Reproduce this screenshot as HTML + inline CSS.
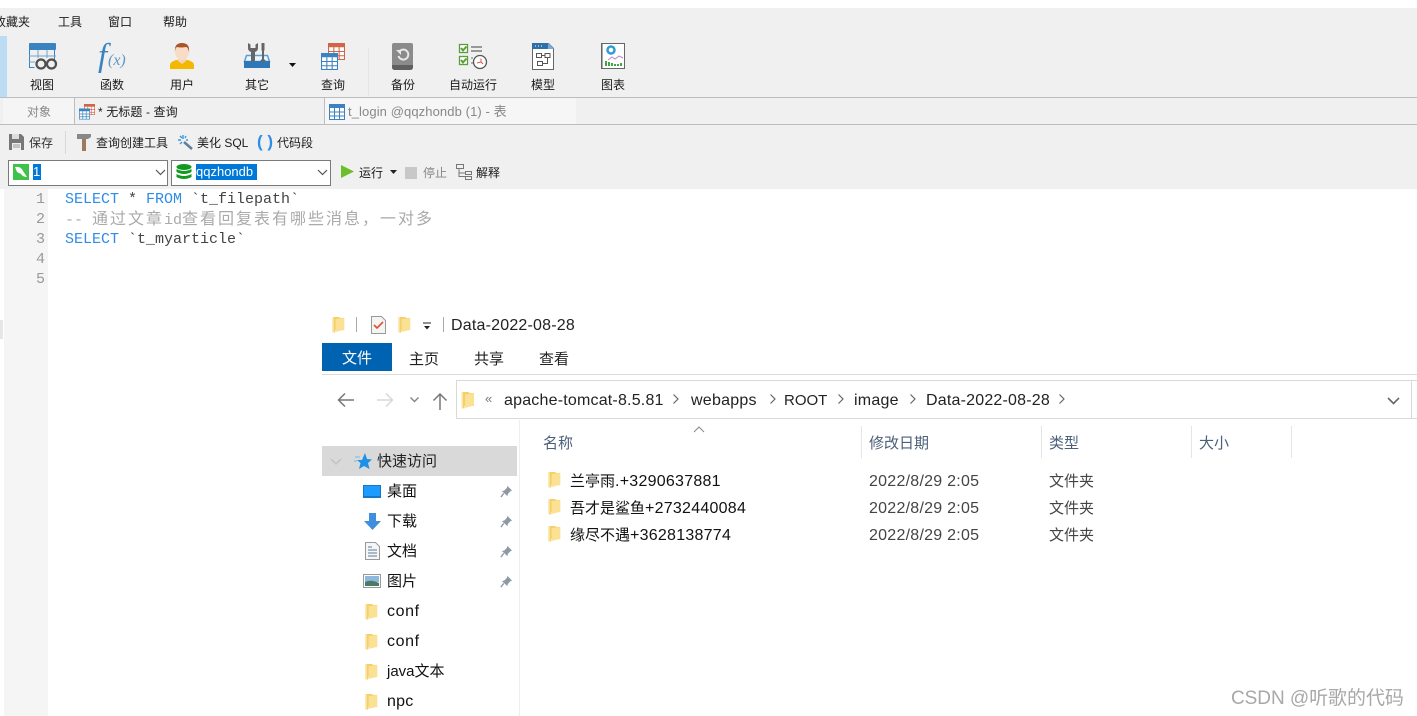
<!DOCTYPE html>
<html><head><meta charset="utf-8"><style>
html,body{margin:0;padding:0;background:#fff}
#p{position:relative;width:1417px;height:716px;overflow:hidden;background:#fff;font-family:"Liberation Sans","Noto Sans CJK SC",sans-serif;color:#1a1a1a}
#p div,#p span.t,#p svg{position:absolute}
.t{position:absolute;white-space:nowrap;line-height:20px;height:20px}
.s{font-size:12px}
.c{text-align:center;width:80px}
.n{font-size:15px}
.l{font-size:16px;letter-spacing:.25px}
.m{font-family:"Liberation Mono","Noto Sans CJK SC",monospace;font-size:15px;color:#2f8ce8}
.m i{font-style:normal;font-size:16px;letter-spacing:2px}
.m b{font-weight:normal;color:#444}
</style></head><body><div id="p">
<svg width="0" height="0"><defs>
<symbol id="f" viewBox="0 0 13 18"><path d="M0 1h7l1 1h4.500v13H3v2.500H0z" fill="#f5d06a"/><path d="M3.500 3.500L12.500 2v12.500L3.500 17z" fill="#fbe193"/><path d="M0 1h1.500v16.500H0z" fill="#fbe6a8"/></symbol>
<symbol id="pin" viewBox="0 0 14 14"><path d="M8 1l5 5-1.500.5-3 3L8 12 2 6.500l2.500-.5 3-3z" fill="#8e99a3"/><path d="M4 9l-3 4" stroke="#8e99a3" stroke-width="1.500"/></symbol>
<symbol id="tb" viewBox="0 0 16 16"><rect x=".5" y=".5" width="15" height="15" fill="#fff" stroke="#3b83c0"/><rect width="16" height="4" fill="#3b83c0"/><path d="M0 8h16M0 12h16M5.500 4v12M10.500 4v12" stroke="#3b83c0"/></symbol>
<symbol id="tr" viewBox="0 0 16 16"><rect x=".5" y=".5" width="15" height="15" fill="#fff" stroke="#d2644a"/><rect width="16" height="4" fill="#d2644a"/><path d="M0 8h16M0 12h16M5.500 4v12M10.500 4v12" stroke="#d2644a"/></symbol>
</defs></svg>

<!-- app chrome -->
<div style="left:0;top:8px;width:1417px;height:181px;background:#f0f0f0"></div>
<div style="left:0;top:36px;width:7px;height:61px;background:#bcdcf4"></div>
<span class="t s" style="left:-6px;top:12px">收藏夹</span>
<span class="t s" style="left:58px;top:12px">工具</span>
<span class="t s" style="left:108px;top:12px">窗口</span>
<span class="t s" style="left:163px;top:12px">帮助</span>

<!-- view -->
<svg style="left:28px;top:42px" width="30" height="28" viewBox="0 0 30 28"><path d="M1.500 1.500h25v18M1.500 1.500v24h5" fill="none" stroke="#3b83c0"/><rect x="1" y="1" width="27" height="7" rx="1" fill="#3b83c0"/><path d="M1 14h27M1 20h6M10 8v8M19 8v8" stroke="#6fa5d0"/><circle cx="13" cy="22" r="4.500" fill="#f0f0f0" stroke="#4f4f4f" stroke-width="2.200"/><circle cx="23.500" cy="22" r="4.500" fill="#f0f0f0" stroke="#4f4f4f" stroke-width="2.200"/></svg>
<span class="t" style="left:98px;top:43px;font:italic 33px/27px 'Liberation Serif',serif;color:#3b83c0;height:27px">f</span>
<span class="t" style="left:108px;top:52px;font:italic 16px/18px 'Liberation Serif',serif;color:#5c98c8;height:18px">(x)</span>
<!-- user -->
<svg style="left:169px;top:42px" width="26" height="28" viewBox="0 0 26 28"><path d="M1 27v-4q0-3 6-5h12q6 2 6 5v4z" fill="#f5b800"/><path d="M9 13h8v6l-4 3-4-3z" fill="#f3d4bc"/><ellipse cx="13" cy="10" rx="7" ry="8" fill="#f8dcc8"/><path d="M6 10q-1-9 7-9t7 9q-1-5-3-5-5 1-9 0-2 1-2 5z" fill="#a8562a"/></svg>
<!-- tools -->
<svg style="left:243px;top:42px" width="28" height="28" viewBox="0 0 28 28"><path d="M3.500 13.500h21l2 6h-25z" fill="#eef4fa" stroke="#5aa0d8" stroke-width="1.500"/><path d="M1 19h26v7H1z" fill="#2f78b5"/><path d="M5 1v5q0 3 3 4v9h4v-9q3-1 3-4V1l-2.500 1.500v3.500h-5V2.500z" fill="#666"/><path d="M18.500 1h3v7l-.5 1v8l2 2h-6l2-2V9l-.5-1z" fill="#666"/></svg>
<svg style="left:289px;top:63px" width="7" height="5"><path d="M0 0h7L3.500 4z" fill="#111"/></svg>
<!-- query -->
<svg style="left:328px;top:43px" width="17" height="17"><use href="#tr" width="17" height="17"/></svg>
<svg style="left:321px;top:53px" width="17" height="17"><use href="#tb" width="17" height="17"/></svg>
<div style="left:368px;top:48px;width:1px;height:48px;background:#e2e6ea"></div>
<!-- backup -->
<svg style="left:392px;top:43px" width="21" height="27" viewBox="0 0 21 27"><rect width="21" height="26" rx="2" fill="#8b8b8b"/><path d="M0 22h21v2q0 3-3 3H3q-3 0-3-3z" fill="#606060"/><path d="M7 9a5 5 0 1 1-.5 4" fill="none" stroke="#e8e8e8" stroke-width="2"/><path d="M4 7h5v5z" fill="#e8e8e8"/></svg>
<!-- autorun -->
<svg style="left:458px;top:43px" width="30" height="27" viewBox="0 0 30 27"><rect x="1.500" y="1.500" width="8" height="8" fill="#fff" stroke="#5b9e3a" stroke-width="1.300"/><path d="M3 5l2 2.500L8.500 3.500" fill="none" stroke="#5b9e3a" stroke-width="2"/><rect x="1.500" y="13.500" width="8" height="8" fill="#fff" stroke="#5b9e3a" stroke-width="1.300"/><path d="M3 17l2 2.500 3.500-4" fill="none" stroke="#5b9e3a" stroke-width="2"/><path d="M13 4h11M13 8h11" stroke="#999" stroke-width="2"/><path d="M13 15h2M13 20h2" stroke="#999" stroke-width="1.500"/><circle cx="22" cy="19" r="6.500" fill="#fff" stroke="#555" stroke-width="1.300"/><path d="M23 15.500v3.500l-4 1M23 19l2 2" fill="none" stroke="#d9534f"/></svg>
<!-- model -->
<svg style="left:532px;top:43px" width="22" height="27" viewBox="0 0 22 27"><path d="M.5 .5h16l5 5v21H.5z" fill="#fff" stroke="#666"/><path d="M0 0h16v6H0z" fill="#2f6ea8"/><path d="M16 0l6 6h-6z" fill="#6fb0e0"/><path d="M3 3h1M6 3h1M9 3h1" stroke="#fff"/><path d="M4.500 10.500h5v4h-5zM13 10.500h5v4h-5zM5.500 18.500h5v4h-5zM9.500 12.500h3.500M15.500 14.500v6h-5" fill="none" stroke="#555"/></svg>
<!-- chart -->
<svg style="left:601px;top:43px" width="24" height="27" viewBox="0 0 24 27"><rect x=".5" y=".5" width="23" height="25" fill="#fff" stroke="#666"/><path d="M1.500 1v24" stroke="#aaa"/><circle cx="10" cy="7" r="3.500" fill="none" stroke="#2f9bd8" stroke-width="2.500"/><path d="M7 17l4-3 3 2 4-3 4 2" fill="none" stroke="#c084d0"/><path d="M5 18v5M8 19v4M11 20v3M14 21v2M17 21v2M20 20v3" stroke="#3fa648" stroke-width="2"/></svg>

<span class="t s c" style="left:2px;top:75px">视图</span>
<span class="t s c" style="left:72px;top:75px">函数</span>
<span class="t s c" style="left:142px;top:75px">用户</span>
<span class="t s c" style="left:217px;top:75px">其它</span>
<span class="t s c" style="left:293px;top:75px">查询</span>
<span class="t s c" style="left:363px;top:75px">备份</span>
<span class="t s c" style="left:433px;top:75px">自动运行</span>
<span class="t s c" style="left:503px;top:75px">模型</span>
<span class="t s c" style="left:573px;top:75px">图表</span>

<!-- tabs -->
<div style="left:0;top:97px;width:1417px;height:1px;background:#bdbdbd"></div>
<div style="left:0;top:124px;width:1417px;height:1px;background:#bdbdbd"></div>
<div style="left:3px;top:98px;width:71px;height:26px;background:#f5f5f5;border-right:1px solid #bdbdbd"></div>
<span class="t s" style="left:27px;top:102px;color:#888">对象</span>
<svg style="left:84px;top:104px" width="11" height="11"><use href="#tr" width="11" height="11"/></svg>
<svg style="left:79px;top:108px" width="11" height="12"><use href="#tb" width="11" height="12"/></svg>
<span class="t s" style="left:98px;top:102px;letter-spacing:.1px">* 无标题 - 查询</span>
<div style="left:324px;top:98px;width:251px;height:26px;background:#f6f6f6;border-left:1px solid #bdbdbd"></div>
<svg style="left:329px;top:104px" width="16" height="16"><use href="#tb" width="16" height="16"/></svg>
<span class="t" style="left:348px;top:102px;color:#888;font-size:13px;letter-spacing:.1px">t_login @qqzhondb (1) - 表</span>

<!-- save toolbar -->
<svg style="left:9px;top:134px" width="15" height="16" viewBox="0 0 15 16"><path d="M0 0h12l3 3v13H0z" fill="#777"/><path d="M3 0h7v5H3z" fill="#ddd"/><path d="M3 9h9v7H3z" fill="#eee"/><path d="M4 11h7M4 13h7" stroke="#999"/></svg>
<span class="t s" style="left:29px;top:133px;color:#333">保存</span>
<div style="left:65px;top:131px;width:1px;height:23px;background:#d8d8d8"></div>
<svg style="left:77px;top:134px" width="14" height="17" viewBox="0 0 14 17"><path d="M0 0h14v3l-3 2H0z" fill="#888"/><path d="M5 5h4v12H5z" fill="#9a7b62"/></svg>
<span class="t s" style="left:96px;top:133px">查询创建工具</span>
<svg style="left:178px;top:135px" width="15" height="15" viewBox="0 0 15 15"><path d="M6 7l8 7" stroke="#5f7f9c" stroke-width="2.500"/><path d="M5 0v4M0 5h3M2 1l2 2M8 1L7 3M2 9l2-2M10 5H8" stroke="#3a9ae0" stroke-width="1.400"/></svg>
<span class="t s" style="left:197px;top:133px">美化 SQL</span>
<span class="t" style="left:257px;top:133px;font-size:17px;font-weight:bold;color:#2f8ce8;line-height:18px;letter-spacing:0">( )</span>
<span class="t s" style="left:277px;top:133px">代码段</span>

<!-- combos -->
<div style="left:8px;top:160px;width:158px;height:24px;border:1px solid #7a7a7a;background:#fff"></div>
<div style="left:13px;top:164px;width:16px;height:16px;background:#3fc24a"></div>
<svg style="left:14px;top:165px" width="14" height="14"><path d="M1 2q6-1 8 4l4 6q-4 0-6-3L3 7z" fill="#fff"/></svg>
<div style="left:33px;top:164px;width:8px;height:16px;background:#0078d7;color:#fff;font-size:13px;line-height:16px">1</div>
<svg style="left:155px;top:169px" width="11" height="7"><path d="M1 1l4.500 4.500L10 1" fill="none" stroke="#555" stroke-width="1.200"/></svg>
<div style="left:171px;top:160px;width:158px;height:24px;border:1px solid #7a7a7a;background:#fff"></div>
<svg style="left:176px;top:164px" width="16" height="16" viewBox="0 0 16 16"><ellipse cx="8" cy="3" rx="7.500" ry="3" fill="#119a1e"/><path d="M.5 5q7.500 4 15 0v3q-7.500 4-15 0zM.5 10q7.500 4 15 0v3q-7.500 4-15 0z" fill="#119a1e"/></svg>
<div style="left:196px;top:164px;width:61px;height:16px;background:#0078d7;color:#fff;font-size:13px;line-height:16px">qqzhondb</div>
<svg style="left:317px;top:169px" width="11" height="7"><path d="M1 1l4.500 4.500L10 1" fill="none" stroke="#555" stroke-width="1.200"/></svg>
<svg style="left:341px;top:165px" width="13" height="13"><path d="M0 0l13 6.500L0 13z" fill="#6cbf2a"/></svg>
<span class="t s" style="left:359px;top:163px">运行</span>
<svg style="left:390px;top:170px" width="7" height="4"><path d="M0 0h7L3.500 4z" fill="#222"/></svg>
<div style="left:405px;top:167px;width:12px;height:12px;background:#c8c8c8"></div>
<span class="t s" style="left:423px;top:163px;color:#888">停止</span>
<svg style="left:456px;top:164px" width="16" height="16" viewBox="0 0 16 16"><path d="M.5 .5h7v4h-7zM9.500 7.500h6v3h-6zM9.500 12.500h6v3h-6zM3 4.500v8h6M3 9h6" fill="none" stroke="#777"/></svg>
<span class="t s" style="left:476px;top:163px">解释</span>

<!-- editor -->
<div style="left:4px;top:189px;width:44px;height:527px;background:#f5f5f5"></div>
<div style="left:0;top:320px;width:3px;height:19px;background:#e6e6e6"></div>
<span class="t" style="left:36px;top:190px;font:15px/20px 'Liberation Mono',monospace;color:#999">1</span>
<span class="t" style="left:36px;top:210px;font:15px/20px 'Liberation Mono',monospace;color:#999">2</span>
<span class="t" style="left:36px;top:230px;font:15px/20px 'Liberation Mono',monospace;color:#999">3</span>
<span class="t" style="left:36px;top:250px;font:15px/20px 'Liberation Mono',monospace;color:#999">4</span>
<span class="t" style="left:36px;top:270px;font:15px/20px 'Liberation Mono',monospace;color:#999">5</span>
<span class="t m" style="left:65px;top:190px">SELECT <b>*</b> FROM <b>`t_filepath`</b></span>
<span class="t m" style="left:65px;top:210px;color:#aaa">-- <i>通过文章</i>id<i>查看回复表有哪些消息，一对多</i></span>
<span class="t m" style="left:65px;top:230px">SELECT <b>`t_myarticle`</b></span>

<!-- explorer -->
<div style="left:322px;top:305px;width:1095px;height:411px;background:#fff"></div>
<svg style="left:332px;top:316px" width="13" height="17"><use href="#f" width="13" height="17"/></svg>
<div style="left:356px;top:317px;width:1px;height:15px;background:#aaa"></div>
<svg style="left:371px;top:316px" width="15" height="18" viewBox="0 0 15 18"><path d="M.5 .5h10l4 4v13H.5z" fill="#f4f4f4" stroke="#999"/><path d="M3 9l3 3 6-6" fill="none" stroke="#e2502a" stroke-width="1.600"/></svg>
<svg style="left:398px;top:316px" width="13" height="17"><use href="#f" width="13" height="17"/></svg>
<svg style="left:423px;top:322px" width="8" height="8"><path d="M0 1h8" stroke="#222"/><path d="M1 4h6L4 7.500z" fill="#222"/></svg>
<div style="left:443px;top:317px;width:1px;height:15px;background:#aaa"></div>
<span class="t l" style="left:451px;top:316px;color:#222;letter-spacing:.2px">Data-2022-08-28</span>
<div style="left:322px;top:343px;width:70px;height:28px;background:#0063b1"></div>
<span class="t n" style="left:342px;top:349px;color:#fff">文件</span>
<span class="t n" style="left:409px;top:350px;color:#222">主页</span>
<span class="t n" style="left:474px;top:350px;color:#222">共享</span>
<span class="t n" style="left:539px;top:350px;color:#222">查看</span>
<div style="left:322px;top:374px;width:1095px;height:1px;background:#dadada"></div>

<svg style="left:337px;top:392px" width="18" height="16"><path d="M1 8h16M8 1.500L1.500 8 8 14.500" fill="none" stroke="#777" stroke-width="1.500"/></svg>
<svg style="left:376px;top:392px" width="18" height="16"><path d="M1 8h16M10 1.500L16.500 8 10 14.500" fill="none" stroke="#d8d8d8" stroke-width="1.500"/></svg>
<svg style="left:409px;top:396px" width="11" height="8"><path d="M1.500 1.500l4 4 4-4" fill="none" stroke="#888" stroke-width="1.500"/></svg>
<svg style="left:432px;top:393px" width="16" height="18"><path d="M8 17V1M1.500 7.500L8 1l6.500 6.500" fill="none" stroke="#777" stroke-width="1.500"/></svg>
<div style="left:456px;top:380px;width:961px;height:37px;border:1px solid #d9d9d9;border-right:0;background:#fff"></div>
<div style="left:1411px;top:381px;width:1px;height:37px;background:#d9d9d9"></div>
<svg style="left:461px;top:391px" width="14" height="18"><use href="#f" width="14" height="18"/></svg>
<span class="t" style="left:485px;top:389px;font-size:13px;color:#777">«</span>
<span class="t l" style="left:504px;top:391px;color:#222;letter-spacing:.2px">apache-tomcat-8.5.81</span>
<span class="t l" style="left:691px;top:391px;color:#222">webapps</span>
<span class="t n" style="left:784px;top:391px;color:#222">ROOT</span>
<span class="t l" style="left:854px;top:391px;color:#222">image</span>
<span class="t l" style="left:926px;top:391px;color:#222;letter-spacing:.2px">Data-2022-08-28</span>
<svg style="left:672px;top:393px" width="8" height="12"><path d="M1.500 1.500L6 6l-4.500 4.500" fill="none" stroke="#666" stroke-width="1.200"/></svg>
<svg style="left:769px;top:393px" width="8" height="12"><path d="M1.500 1.500L6 6l-4.500 4.500" fill="none" stroke="#666" stroke-width="1.200"/></svg>
<svg style="left:837px;top:393px" width="8" height="12"><path d="M1.500 1.500L6 6l-4.500 4.500" fill="none" stroke="#666" stroke-width="1.200"/></svg>
<svg style="left:909px;top:393px" width="8" height="12"><path d="M1.500 1.500L6 6l-4.500 4.500" fill="none" stroke="#666" stroke-width="1.200"/></svg>
<svg style="left:1058px;top:393px" width="8" height="12"><path d="M1.500 1.500L6 6l-4.500 4.500" fill="none" stroke="#666" stroke-width="1.200"/></svg>
<svg style="left:1387px;top:397px" width="13" height="8"><path d="M1 1l5.500 5.500L12 1" fill="none" stroke="#666" stroke-width="1.600"/></svg>

<!-- sidebar -->
<div style="left:519px;top:420px;width:1px;height:296px;background:#eeeeee"></div>
<div style="left:322px;top:446px;width:195px;height:30px;background:#d9d9d9"></div>
<svg style="left:330px;top:458px" width="12" height="8"><path d="M1 1l5 5 5-5" fill="none" stroke="#c4c4c4" stroke-width="1.500"/></svg>
<svg style="left:354px;top:453px" width="18" height="17" viewBox="0 0 18 17"><path d="M11 0l2 6 5 .5-4 3.500 1.500 6L10 13l-5 3 1.500-6L3 7h5z" fill="#1e90e8"/><path d="M1 4h5M0 8h3" stroke="#7ab8e8"/></svg>
<span class="t n" style="left:377px;top:452px;color:#222">快速访问</span>

<svg style="left:363px;top:485px" width="18" height="13"><rect width="18" height="13" fill="#1577c9"/><rect x="1" y="1" width="16" height="10" fill="#1e9bff"/></svg>
<span class="t n" style="left:387px;top:482px;color:#111">桌面</span>
<svg style="left:364px;top:513px" width="17" height="17"><path d="M5 0h7v8h5l-8.500 9L0 8h5z" fill="#3f8fdf"/></svg>
<span class="t n" style="left:387px;top:512px;color:#111">下载</span>
<svg style="left:365px;top:542px" width="15" height="18" viewBox="0 0 15 18"><path d="M.5 .5h10l4 4v13H.5z" fill="#f6f6f6" stroke="#999"/><path d="M3 5h4M3 8h9M3 11h9M3 14h9" stroke="#5a7f99"/></svg>
<span class="t n" style="left:387px;top:542px;color:#111">文档</span>
<svg style="left:363px;top:574px" width="18" height="14" viewBox="0 0 18 14"><rect x=".5" y=".5" width="17" height="13" fill="#fff" stroke="#999"/><rect x="2" y="2" width="14" height="6" fill="#8fb8dc"/><path d="M2 8q6-3 14 1v3H2z" fill="#4c7a66"/></svg>
<span class="t n" style="left:387px;top:572px;color:#111">图片</span>
<svg style="left:500px;top:485px" width="13" height="13"><use href="#pin" width="13" height="13"/></svg>
<svg style="left:500px;top:515px" width="13" height="13"><use href="#pin" width="13" height="13"/></svg>
<svg style="left:500px;top:545px" width="13" height="13"><use href="#pin" width="13" height="13"/></svg>
<svg style="left:500px;top:575px" width="13" height="13"><use href="#pin" width="13" height="13"/></svg>
<svg style="left:365px;top:603px" width="13" height="17"><use href="#f" width="13" height="17"/></svg>
<span class="t l" style="left:387px;top:602px;color:#111;letter-spacing:.6px">conf</span>
<svg style="left:365px;top:633px" width="13" height="17"><use href="#f" width="13" height="17"/></svg>
<span class="t l" style="left:387px;top:632px;color:#111;letter-spacing:.6px">conf</span>
<svg style="left:365px;top:663px" width="13" height="17"><use href="#f" width="13" height="17"/></svg>
<span class="t n" style="left:387px;top:662px;color:#111">java文本</span>
<svg style="left:365px;top:693px" width="13" height="17"><use href="#f" width="13" height="17"/></svg>
<span class="t l" style="left:387px;top:692px;color:#111">npc</span>

<!-- list header -->
<svg style="left:693px;top:426px" width="12" height="7"><path d="M1 6l5-5 5 5" fill="none" stroke="#888"/></svg>
<span class="t n" style="left:543px;top:434px;color:#4c607a">名称</span>
<span class="t n" style="left:869px;top:434px;color:#4c607a">修改日期</span>
<span class="t n" style="left:1049px;top:434px;color:#4c607a">类型</span>
<span class="t n" style="left:1199px;top:434px;color:#4c607a">大小</span>
<div style="left:861px;top:426px;width:1px;height:32px;background:#e5e5e5"></div>
<div style="left:1041px;top:426px;width:1px;height:32px;background:#e5e5e5"></div>
<div style="left:1191px;top:426px;width:1px;height:32px;background:#e5e5e5"></div>
<div style="left:1291px;top:426px;width:1px;height:32px;background:#e5e5e5"></div>

<!-- rows -->
<svg style="left:548px;top:471px" width="13" height="17"><use href="#f" width="13" height="17"/></svg>
<span class="t n" style="left:570px;top:472px;color:#111">兰亭雨<span class="l">.+3290637881</span></span>
<span class="t l" style="left:869px;top:472px;color:#444">2022/8/29 2:05</span>
<span class="t n" style="left:1049px;top:472px;color:#444">文件夹</span>
<svg style="left:548px;top:498px" width="13" height="17"><use href="#f" width="13" height="17"/></svg>
<span class="t n" style="left:570px;top:499px;color:#111">吾才是鲨鱼<span class="l">+2732440084</span></span>
<span class="t l" style="left:869px;top:499px;color:#444">2022/8/29 2:05</span>
<span class="t n" style="left:1049px;top:499px;color:#444">文件夹</span>
<svg style="left:548px;top:525px" width="13" height="17"><use href="#f" width="13" height="17"/></svg>
<span class="t n" style="left:570px;top:526px;color:#111">缘尽不遇<span class="l">+3628138774</span></span>
<span class="t l" style="left:869px;top:526px;color:#444">2022/8/29 2:05</span>
<span class="t n" style="left:1049px;top:526px;color:#444">文件夹</span>

<span class="t" style="left:1231px;top:689px;font-size:19px;color:#a8a8a8;letter-spacing:-.05px">CSDN @听歌的代码</span>
</div></body></html>
